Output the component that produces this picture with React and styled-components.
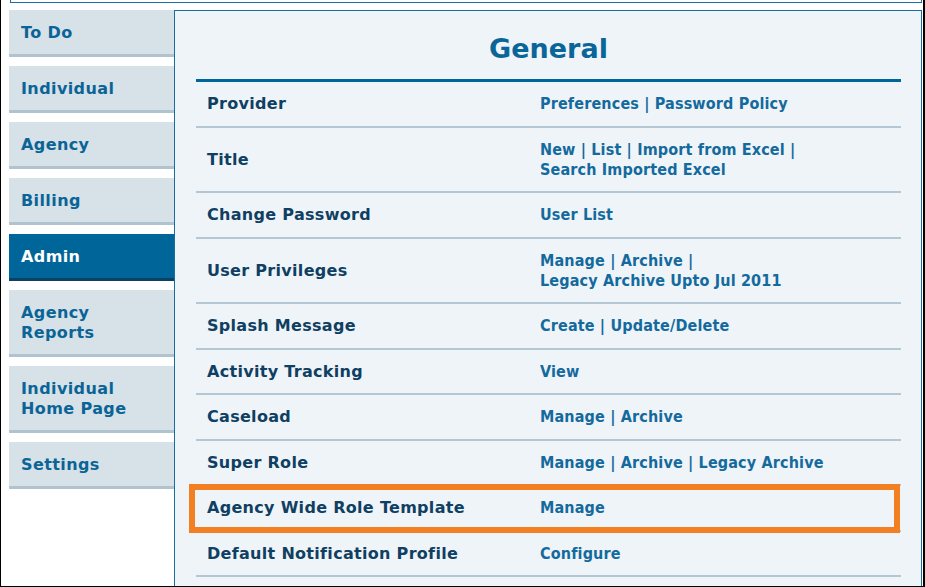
import React from "react";
import styled, { createGlobalStyle } from "styled-components";

const Global = createGlobalStyle`
  html, body { margin: 0; padding: 0; background: #fff; }
  body { font-family: "DejaVu Sans", Verdana, sans-serif; }
  * { box-sizing: border-box; }
`;

const Frame = styled.div`
  width: 925px;
  height: 587px;
  border-left: 1px solid #000;
  border-right: 2px solid #000;
  border-bottom: 1px solid #000;
  overflow: hidden;
  display: flex;
  flex-direction: column;
`;

const TopStrip = styled.div`
  height: 3px;
  margin: 0 1px 0 9px;
  border-bottom: 1px solid #1d6ea0;
  border-left: 1px solid #1d6ea0;
  border-right: 1px solid #1d6ea0;
  flex: none;
`;

const Body = styled.div`
  display: flex;
  align-items: flex-start;
  padding: 7px 0 0 8px;
  flex: 1;
  min-height: 0;
`;

const Sidebar = styled.nav`
  width: 165px;
  display: flex;
  flex-direction: column;
  gap: 9px;
  flex: none;
`;

const Tab = styled.div`
  background: ${(p) => (p.$active ? "#006699" : "#d6e1e8")};
  border-bottom: 3px solid ${(p) => (p.$active ? "#0a4263" : "#b1c3cf")};
  color: ${(p) => (p.$active ? "#ffffff" : "#0b6496")};
  font-weight: bold;
  font-size: 16px;
  letter-spacing: 0.4px;
  line-height: 20px;
  padding: 13px 12px 11px;
`;

const Panel = styled.main`
  flex: 1;
  align-self: stretch;
  margin-right: 1px;
  border: 1px solid #1a6c9e;
  border-bottom: none;
  background: #eff4f8;
  padding: 0 20px 0 21px;
`;

const Heading = styled.h1`
  margin: 0;
  padding: 14px 0 6px;
  line-height: 48px;
  font-size: 27px;
  font-weight: bold;
  color: #0a6699;
  text-align: center;
`;

const Table = styled.div`
  border-top: 3px solid #00659a;
  display: flex;
  flex-direction: column;
`;

const Row = styled.div`
  position: relative;
  display: grid;
  grid-template-columns: 344px 1fr;
  border-bottom: 2px solid #b4c7d4;
  padding: 12px 0 11.5px;
  font-size: 16px;
  line-height: 20px;
  font-weight: bold;
`;

const Label = styled.div`
  color: #0f3f62;
  padding-left: 11px;
  letter-spacing: 0.3px;
  align-self: center;
`;

const Links = styled.div`
  color: #146a9d;
  font-family: "DejaVu Sans Condensed", "DejaVu Sans", sans-serif;
  letter-spacing: 0.15px;
`;

const Highlight = styled.div`
  position: absolute;
  left: -7px;
  right: 1px;
  top: -2px;
  bottom: -3px;
  border: 6px solid #f28021;
  pointer-events: none;
`;

const tabs = [
  ["To Do"],
  ["Individual"],
  ["Agency"],
  ["Billing"],
  ["Admin", true],
  ["Agency<br>Reports"],
  ["Individual<br>Home Page"],
  ["Settings"],
];

const rows = [
  ["Provider", ["Preferences | Password Policy"]],
  ["Title", ["New | List | Import from Excel |", "Search Imported Excel"]],
  ["Change Password", ["User List"]],
  ["User Privileges", ["Manage | Archive |", "Legacy Archive Upto Jul 2011"]],
  ["Splash Message", ["Create | Update/Delete"]],
  ["Activity Tracking", ["View"]],
  ["Caseload", ["Manage | Archive"]],
  ["Super Role", ["Manage | Archive | Legacy Archive"]],
  ["Agency Wide Role Template", ["Manage"], true],
  ["Default Notification Profile", ["Configure"]],
];

export default function App() {
  return (
    <>
      <Global />
      <Frame>
        <TopStrip />
        <Body>
          <Sidebar>
            {tabs.map(([t, active]) => (
              <Tab key={t} $active={active}>
                {t.split("<br>").map((line, i) => (
                  <div key={i}>{line}</div>
                ))}
              </Tab>
            ))}
          </Sidebar>
          <Panel>
            <Heading>General</Heading>
            <Table>
              {rows.map(([label, links, hl]) => (
                <Row key={label}>
                  <Label>{label}</Label>
                  <Links>
                    {links.map((l, i) => (
                      <div key={i}>{l}</div>
                    ))}
                  </Links>
                  {hl && <Highlight />}
                </Row>
              ))}
            </Table>
          </Panel>
        </Body>
      </Frame>
    </>
  );
}
